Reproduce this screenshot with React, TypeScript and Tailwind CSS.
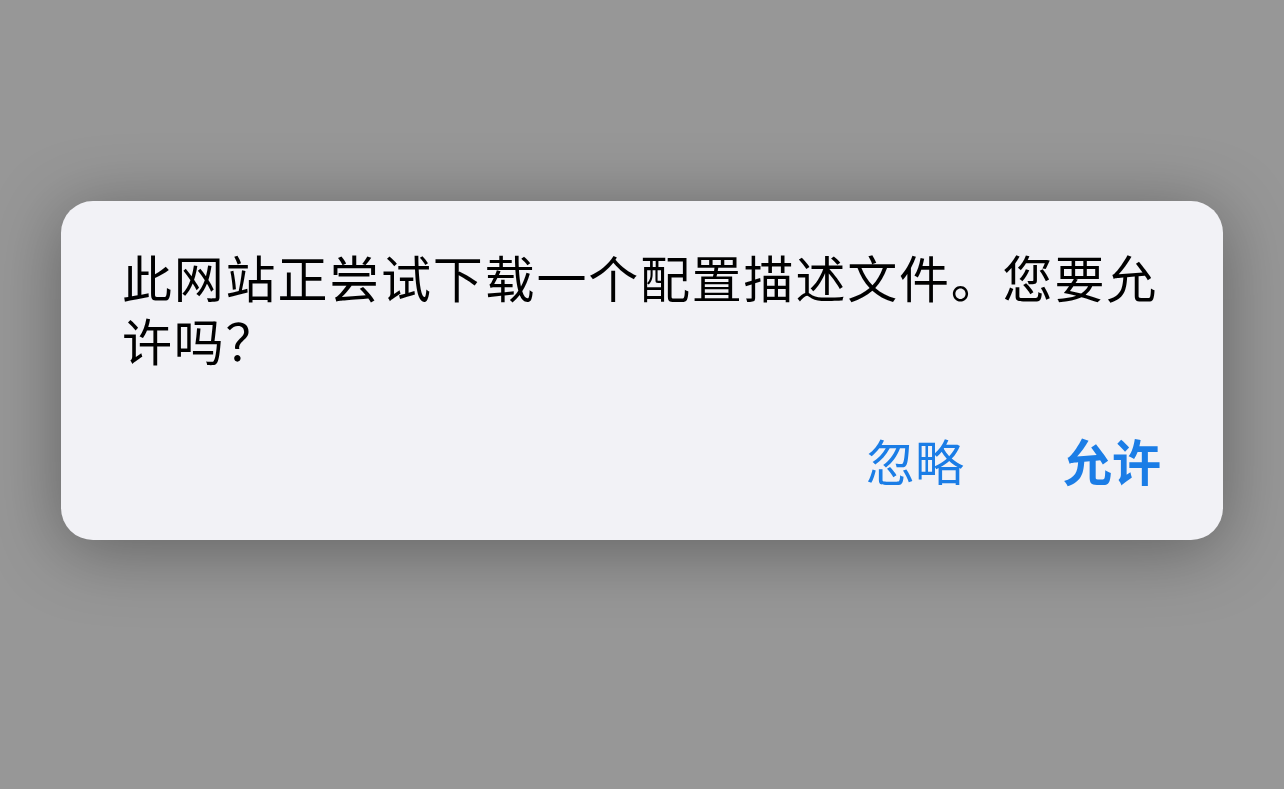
import React from 'react';

const font = { fontFamily: '"Noto Sans CJK SC", "Noto Sans", sans-serif' };

export default function App() {
  return (
    <div className="w-full h-screen bg-[#979797] overflow-hidden" style={font}>
      <div className="mx-[61px] mt-[201px] h-[339px] rounded-[32px] bg-[#f2f2f6] shadow-[0_10px_70px_rgba(0,0,0,0.35)] flex flex-col">
        <div className="pt-[44px] pl-[61px] pr-[50px] text-[50px] leading-[63px] tracking-[1.8px] text-black">
          <div>此网站正尝试下载一个配置描述文件。您要允</div>
          <div>许吗？</div>
        </div>
        <div className="mt-auto pb-[50px] pr-[62px] flex justify-end gap-[99px] text-[49px] leading-[60px] text-[#1b7de6]">
          <button className="font-normal">忽略</button>
          <button className="font-semibold">允许</button>
        </div>
      </div>
    </div>
  );
}
